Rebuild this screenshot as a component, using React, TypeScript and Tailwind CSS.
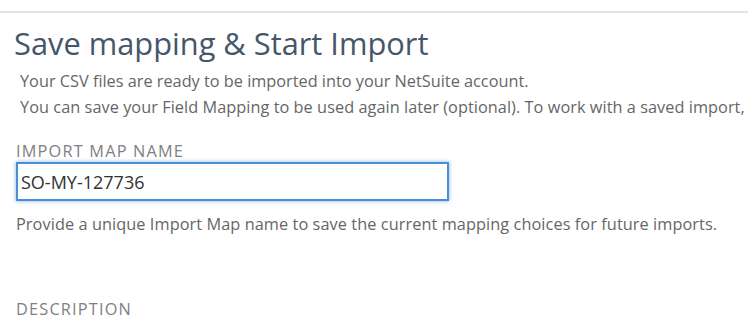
export default function App() {
  return (
    <div className="w-[748px] h-[321px] overflow-hidden bg-white font-['Open_Sans',sans-serif]">
      <div className="pt-[11px]">
        <div className="h-[2px] bg-[#e2e2e2]" />
      </div>
      <h1 className="mt-[12px] pl-[14px] text-[30.8px] leading-[36px] text-[#46566a] whitespace-nowrap">
        Save mapping &amp; Start Import
      </h1>
      <div className="mt-[8px] pl-[20px] text-[16.3px] leading-[25px] text-[#666666] whitespace-nowrap">
        <p>Your CSV files are ready to be imported into your NetSuite account.</p>
        <p className="mt-[1px] tracking-[0.05px]">You can save your Field Mapping to be used again later (optional). To work with a saved import,</p>
      </div>
      <div className="mt-[21px] pl-[16px]">
        <label className="block text-[16.3px] leading-[20px] tracking-[1.2px] text-[#808080]">IMPORT MAP NAME</label>
        <div className="mt-[1px] flex h-[39px] w-[433px] items-center border-2 border-[#4a8fd6] px-[3px] shadow-[0_0_4px_rgba(74,143,214,0.7)]">
          <span className="text-[18px] leading-[24px] text-[#333333]">SO-MY-127736</span>
        </div>
        <p className="mt-[13px] text-[16.3px] leading-[20px] tracking-[0.08px] text-[#666666] whitespace-nowrap">
          Provide a unique Import Map name to save the current mapping choices for future imports.
        </p>
        <label className="mt-[65px] block text-[16.3px] leading-[20px] tracking-[1.2px] text-[#808080]">DESCRIPTION</label>
      </div>
    </div>
  );
}
